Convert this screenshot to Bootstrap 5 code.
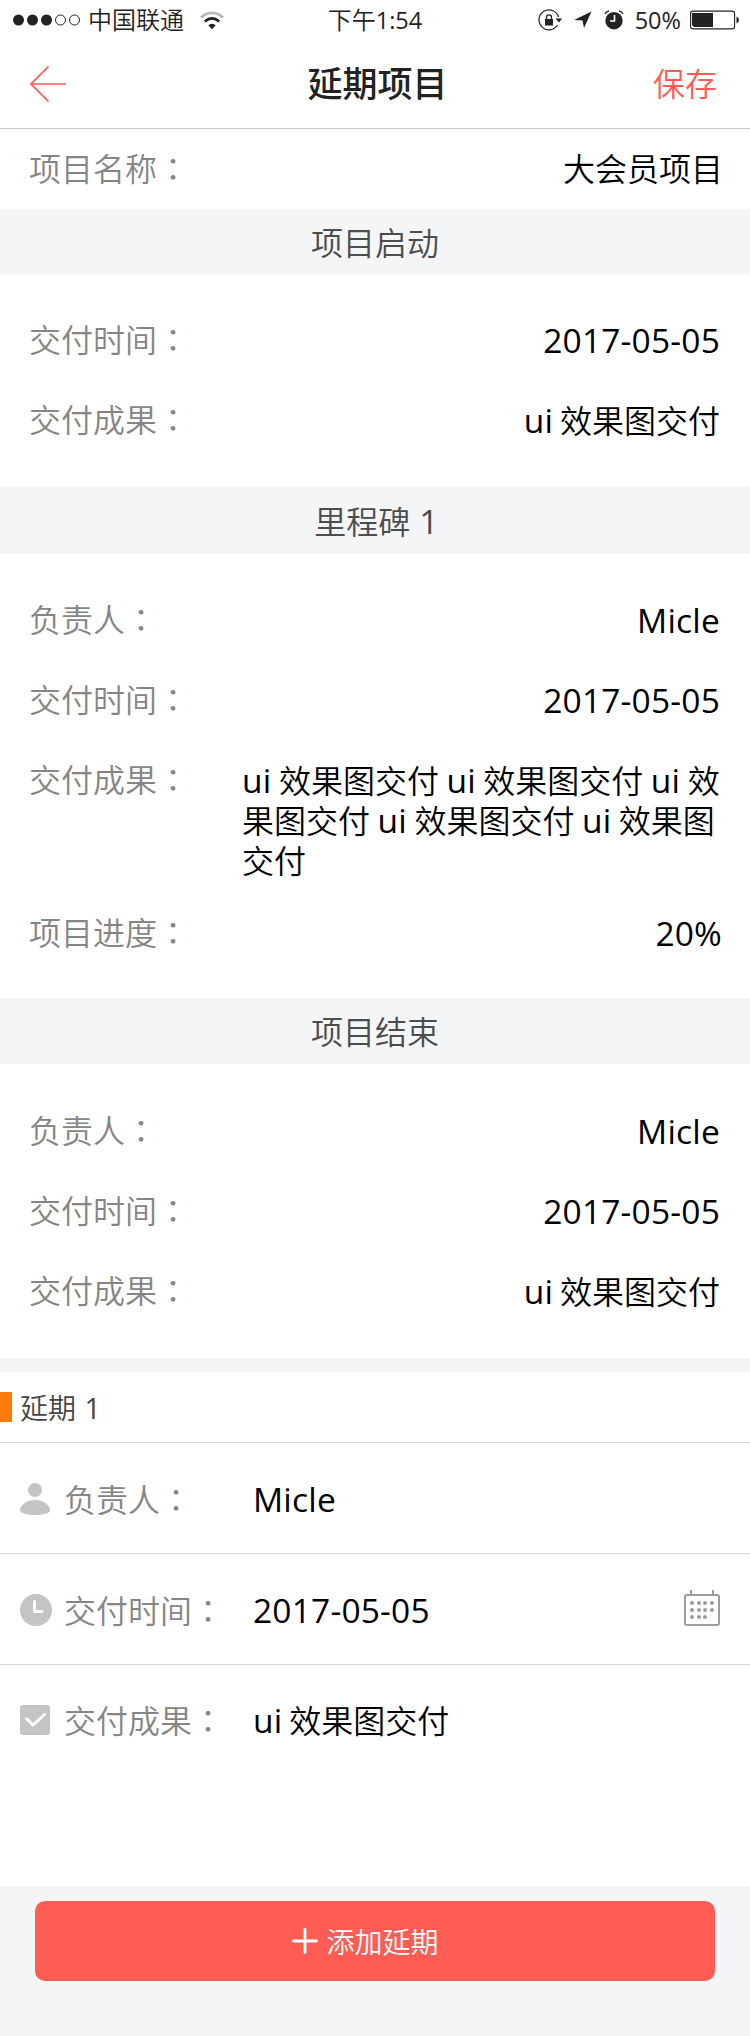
<!DOCTYPE html>
<html lang="zh-CN">
<head>
<meta charset="utf-8">
<meta name="viewport" content="width=device-width, initial-scale=1">
<title>延期项目</title>
<link href="https://cdn.jsdelivr.net/npm/bootstrap@5.3.0/dist/css/bootstrap.min.css" rel="stylesheet">
<style>
  body { font-family: "Open Sans", "Noto Sans CJK SC", sans-serif; font-size: 32px; line-height: 40px; color: #000; background: #fff; font-weight: 350; }
  .cjk, .field-label, .bar-title { font-family: "Noto Sans CJK SC", sans-serif; }
  .colon { font-family: "Noto Sans CJK TC", sans-serif; }
  .lat { font-family: "Open Sans", sans-serif; font-size: 33.5px; font-weight: 400; line-height: 1; letter-spacing: .2px; word-spacing: -2px; }
  .status-bar { height: 40px; font-size: 24px; color: #222; padding: 0 10px 0 13px; }
  .status-bar .lat { font-size: 23.5px; letter-spacing: 0; }
  .status-bar .cjk { padding-bottom: 2px; }
  .status-time { padding-bottom: 2px; }
  .carrier { margin-left: 7px; }
  .percent { margin: 0 9px 0 11px; padding-top: 1px; }
  .gap-icon { margin-left: 9px; }
  .title-bar { height: 89px; border-bottom: 1px solid #c8c7cc; padding: 0 33px 0 30px; color: #222; }
  .title-bar h1 { font-size: 35px; line-height: 40px; font-weight: 500; font-family: "Noto Sans CJK SC", sans-serif; padding: 0 0 4px 5px; }
  .accent { color: #ff5c54; padding-bottom: 5px; }
  .name-row { height: 80px; padding: 0 27px 4px 29px; }
  .bar-title { height: 66px; background: #f4f5f7; color: #4c4c4c; padding-bottom: 2px; }
  .bar-tall { height: 67px; padding-left: 3px; }
  .bar-tall .lat { word-spacing: 0; }
  .field-label { color: #858585; white-space: nowrap; }
  .fields { padding: 45px 30px 0 29px; }
  .fields .field-label { margin: -1px 0 1px; }
  .fields-a { height: 212px; padding-top: 44px; }
  .fields-b { height: 444px; }
  .fields-c { height: 294px; padding-top: 46px; }
  .field { margin-bottom: 40px; }
  .long-field { margin-bottom: 33px; }
  .long-value { width: 482px; margin-right: -4px; }
  .long-value .lat { word-spacing: -1.4px; }
  .percent-value { margin-right: -2px; }
  .strip { height: 14px; background: #f4f5f7; }
  .delay-head { height: 71px; border-bottom: 1px solid #d9d9d9; font-size: 28px; color: #444; }
  .delay-head .lat { font-size: 28.5px; word-spacing: 1px; }
  .marker { width: 12px; height: 30px; background: #ff7a0d; margin-right: 8px; }
  .delay-row { height: 111px; border-bottom: 1px solid #d9d9d9; padding: 0 30px 0 20px; }
  .delay-row.last-row { height: 221px; border: 0; padding-bottom: 112px; }
  .delay-row.last-row .cjk, .delay-row.last-row .field-label { padding-bottom: 2px; }
  .delay-icon { width: 44px; padding-top: 2px; }
  .last-row .delay-icon { padding-top: 0; }
  .delay-label { width: 189px; }
  .calendar { margin-bottom: 3px; }
  .foot { height: 150px; background: #f4f5f7; padding: 15px 35px; }
  .btn-add { height: 80px; background: #ff5c54; color: #fff; border-radius: 10px; font-size: 28px; border: 0; font-weight: 350; padding: 0 31px 0 12px; }
</style>
</head>
<body>
<div class="status-bar d-flex align-items-center justify-content-between position-relative">
  <div class="d-flex align-items-center">
    <svg width="68" height="12" viewBox="0 0 68 12"><g fill="#222"><circle cx="5.5" cy="6" r="5.5"/><circle cx="19.5" cy="6" r="5.5"/><circle cx="33.5" cy="6" r="5.5"/></g><g fill="none" stroke="#222"><circle cx="47.5" cy="6" r="5"/><circle cx="61.5" cy="6" r="5"/></g></svg>
    <span class="cjk carrier">中国联通</span>
    <svg class="ms-3" width="24" height="19" viewBox="0 0 24 19" fill="none"><path d="M.9 6.300Q12-2.600 23.100 6.300" stroke="#bbb" stroke-width="2.800"/><path d="M4.800 10.500Q12 4.300 19.200 10.500" stroke="#222" stroke-width="2.800"/><path d="M8.300 14.300Q12 11.200 15.700 14.300L12 18.300Z" fill="#222"/></svg>
  </div>
  <div class="status-time position-absolute start-50 translate-middle-x"><span class="cjk">下午</span><span class="lat">1:54</span></div>
  <div class="d-flex align-items-center">
    <svg width="24" height="22" viewBox="0 0 24 22"><path d="M20.500 8A10 10 0 1 0 19.500 16" fill="none" stroke="#222" stroke-width="1.200"/><path d="M17.500 9.500H24L21 13.500Z" fill="#222"/><path d="M7 10H15V16.500H7Z" fill="#222"/><path d="M8.500 10V8Q8.500 5.800 11 5.800T13.500 8V10" fill="none" stroke="#222" stroke-width="1.300"/></svg>
    <svg class="gap-icon" width="24" height="20" viewBox="0 0 24 20"><path d="M3 10L20.500 1.500L13 18L11.500 10.500Z" fill="#222"/></svg>
    <svg class="gap-icon" width="20" height="20" viewBox="0 0 20 20"><circle cx="10" cy="10.700" r="8.700" fill="#222"/><path d="M1 4Q2 1.500 5 1M19 4Q18 1.500 15 1" fill="none" stroke="#222" stroke-width="1.300"/><path d="M10.500 5V11H6" fill="none" stroke="#fff" stroke-width="1.600"/></svg>
    <span class="lat percent">50%</span>
    <svg width="50" height="20" viewBox="0 0 50 20"><rect x=".6" y="1.100" width="44" height="17.800" rx="2.500" fill="none" stroke="#222" stroke-width="1.100"/><path d="M2 3H23V17H4L2 15Z" fill="#222"/><path d="M46.500 6.500Q49 7.500 49 10T46.500 13.500Z" fill="#222"/></svg>
  </div>
</div>
<header class="title-bar d-flex align-items-center justify-content-between position-relative">
  <svg width="38" height="36" viewBox="0 0 38 36" fill="none" stroke="#ff5c54" stroke-width="1.700"><path d="M18.500 .5L1 18L18.500 35.500M1 18H36"/></svg>
  <h1 class="m-0 position-absolute start-50 translate-middle-x">延期项目</h1>
  <span class="accent cjk">保存</span>
</header>
<div class="name-row d-flex align-items-center justify-content-between"><span class="field-label">项目名称<span class="colon" lang="zh-TW">：</span></span><span class="cjk">大会员项目</span></div>
<div class="bar-title d-flex align-items-center justify-content-center">项目启动</div>
<section class="fields fields-a">
  <div class="field d-flex justify-content-between"><span class="field-label">交付时间<span class="colon" lang="zh-TW">：</span></span><span class="cjk"><span class="lat">2017-05-05</span></span></div>
  <div class="field d-flex justify-content-between"><span class="field-label">交付成果<span class="colon" lang="zh-TW">：</span></span><span class="cjk"><span class="lat">ui </span>效果图交付</span></div>
</section>
<div class="bar-title bar-tall d-flex align-items-center justify-content-center"><span>里程碑<span class="lat"> 1</span></span></div>
<section class="fields fields-b">
  <div class="field d-flex justify-content-between"><span class="field-label">负责人<span class="colon" lang="zh-TW">：</span></span><span class="cjk"><span class="lat">Micle</span></span></div>
  <div class="field d-flex justify-content-between"><span class="field-label">交付时间<span class="colon" lang="zh-TW">：</span></span><span class="cjk"><span class="lat">2017-05-05</span></span></div>
  <div class="field long-field d-flex justify-content-between"><span class="field-label">交付成果<span class="colon" lang="zh-TW">：</span></span><span class="cjk long-value"><span class="lat">ui </span>效果图交付<span class="lat"> ui </span>效果图交付<span class="lat"> ui </span>效果图交付<span class="lat"> ui </span>效果图交付<span class="lat"> ui </span>效果图交付</span></div>
  <div class="field d-flex justify-content-between"><span class="field-label">项目进度<span class="colon" lang="zh-TW">：</span></span><span class="cjk percent-value"><span class="lat">20%</span></span></div>
</section>
<div class="bar-title d-flex align-items-center justify-content-center">项目结束</div>
<section class="fields fields-c">
  <div class="field d-flex justify-content-between"><span class="field-label">负责人<span class="colon" lang="zh-TW">：</span></span><span class="cjk"><span class="lat">Micle</span></span></div>
  <div class="field d-flex justify-content-between"><span class="field-label">交付时间<span class="colon" lang="zh-TW">：</span></span><span class="cjk"><span class="lat">2017-05-05</span></span></div>
  <div class="field d-flex justify-content-between"><span class="field-label">交付成果<span class="colon" lang="zh-TW">：</span></span><span class="cjk"><span class="lat">ui </span>效果图交付</span></div>
</section>
<div class="strip"></div>
<section>
  <div class="delay-head d-flex align-items-center"><span class="marker"></span><span class="cjk">延期<span class="lat"> 1</span></span></div>
  <div class="delay-row d-flex align-items-center">
    <div class="delay-icon d-flex"><svg width="30" height="32" viewBox="0 0 30 32" fill="#c4c4c4"><circle cx="15" cy="7" r="7"/><path d="M0 27C0 23 6 17 15 17S30 23 30 27C30 30.500 24 32 15 32S0 30.500 0 27Z"/></svg></div>
    <div class="delay-label field-label">负责人<span class="colon" lang="zh-TW">：</span></div><span class="cjk"><span class="lat">Micle</span></span>
  </div>
  <div class="delay-row d-flex align-items-center">
    <div class="delay-icon d-flex"><svg width="32" height="32" viewBox="0 0 32 32"><circle cx="16" cy="16" r="16" fill="#c4c4c4"/><path d="M14.500 7.500V17.500H22" fill="none" stroke="#fff" stroke-width="3" stroke-linecap="round" stroke-linejoin="round"/></svg></div>
    <div class="delay-label field-label">交付时间<span class="colon" lang="zh-TW">：</span></div><span class="cjk"><span class="lat">2017-05-05</span></span>
    <svg class="ms-auto calendar" width="36" height="36" viewBox="0 0 36 36"><rect x="1" y="5" width="34" height="30" rx="2" fill="none" stroke="#9c9c9c" stroke-width="2"/><path d="M7 0V4M29 0V4" stroke="#9c9c9c" stroke-width="2"/><g fill="#9c9c9c"><circle cx="8" cy="13" r="2"/><circle cx="15" cy="13" r="2"/><circle cx="21" cy="13" r="2"/><circle cx="28" cy="13" r="2"/><circle cx="8" cy="20" r="2"/><circle cx="15" cy="20" r="2"/><circle cx="21" cy="20" r="2"/><circle cx="28" cy="20" r="2"/><circle cx="8" cy="27" r="2"/><circle cx="15" cy="27" r="2"/><circle cx="21" cy="27" r="2"/></g></svg>
  </div>
  <div class="delay-row last-row d-flex align-items-center">
    <div class="delay-icon d-flex"><svg width="30" height="30" viewBox="0 0 30 30"><rect width="30" height="30" rx="3" fill="#c4c4c4"/><path d="M6.500 13.500L13 20L24.500 9.500" fill="none" stroke="#fff" stroke-width="3" stroke-linecap="round"/></svg></div>
    <div class="delay-label field-label">交付成果<span class="colon" lang="zh-TW">：</span></div><span class="cjk"><span class="lat">ui </span>效果图交付</span>
  </div>
</section>
<footer class="foot"><button class="btn btn-add w-100 d-flex align-items-center justify-content-center cjk"><svg class="me-2" width="26" height="26" viewBox="0 0 26 26"><path d="M13 1.500V24.500M1.500 13H24.500" stroke="#fff" stroke-width="2.800" stroke-linecap="round"/></svg>添加延期</button></footer>
<script src="https://cdn.jsdelivr.net/npm/bootstrap@5.3.0/dist/js/bootstrap.bundle.min.js"></script>
</body>
</html>
